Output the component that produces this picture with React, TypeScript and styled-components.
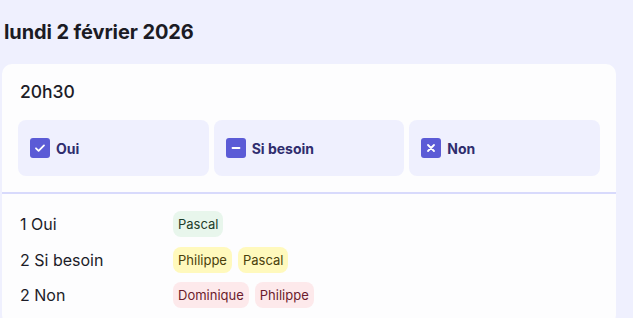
import React from 'react';
import styled, { createGlobalStyle } from 'styled-components';

const GlobalStyle = createGlobalStyle`
  html, body {
    margin: 0;
    padding: 0;
    background: #eff0fe;
    font-family: Inter, 'Noto Sans', sans-serif;
    color: #1c1c28;
  }
`;

const Page = styled.div`
  padding: 18px 17px 0 2px;
`;

const DayTitle = styled.h2`
  margin: 0 0 18px 2px;
  font-size: 20px;
  font-weight: 700;
  letter-spacing: -0.1px;
  line-height: 28px;
  color: #1b1b24;
`;

const Card = styled.section`
  background: #fdfdfe;
  border-radius: 10px;
  overflow: hidden;
`;

const CardHeader = styled.div`
  padding: 17px 16px 16px 16px;
  border-bottom: 2px solid #d8dafc;
`;

const Time = styled.div`
  margin-left: 2px;
  font-size: 17.5px;
  font-weight: 500;
  line-height: 22px;
  margin-bottom: 17px;
`;

const Choices = styled.div`
  display: grid;
  grid-template-columns: repeat(3, 1fr);
  gap: 5px;
`;

const Choice = styled.button`
  display: flex;
  align-items: center;
  gap: 6px;
  height: 56px;
  padding: 0 12px;
  border: none;
  border-radius: 8px;
  background: #eff0fe;
  font-family: inherit;
  font-size: 14px;
  font-weight: 700;
  color: #2f2d6e;
  cursor: pointer;
`;

const Box = styled.span`
  display: inline-flex;
  align-items: center;
  justify-content: center;
  width: 20px;
  height: 20px;
  border-radius: 3px;
  background: #5b5bd6;
  color: #fff;
`;

const Results = styled.div`
  display: flex;
  flex-direction: column;
  gap: 9.5px;
  padding: 17px 18px;
`;

const Row = styled.div`
  display: grid;
  grid-template-columns: 153px 1fr;
  align-items: center;
`;

const Label = styled.span`
  font-size: 16px;
  color: #1c1c28;
`;

const Chips = styled.div`
  display: flex;
  gap: 6px;
`;

const tones = {
  yes: { bg: '#e8f6ec', fg: '#1e3d2a' },
  maybe: { bg: '#fff9bd', fg: '#4a3f0c' },
  no: { bg: '#fde9eb', fg: '#6b1c2c' },
};

type Tone = keyof typeof tones;

const Chip = styled.span<{ $tone: Tone }>`
  display: inline-flex;
  align-items: center;
  height: 26px;
  padding: 0 5px;
  border-radius: 8px;
  font-size: 13px;
  background: ${({ $tone }) => tones[$tone].bg};
  color: ${({ $tone }) => tones[$tone].fg};
`;

const Check = () => (
  <svg width="12" height="12" viewBox="0 0 12 12" fill="none">
    <path d="M2 6.3l2.6 2.5L10 3.4" stroke="#fff" strokeWidth="1.8" strokeLinecap="round" strokeLinejoin="round" />
  </svg>
);

const Dash = () => (
  <svg width="12" height="12" viewBox="0 0 12 12" fill="none">
    <path d="M2.5 6h7" stroke="#fff" strokeWidth="1.8" strokeLinecap="round" />
  </svg>
);

const Cross = () => (
  <svg width="12" height="12" viewBox="0 0 12 12" fill="none">
    <path d="M3 3l6 6M9 3l-6 6" stroke="#fff" strokeWidth="1.8" strokeLinecap="round" />
  </svg>
);

const choices = [
  { label: 'Oui', icon: <Check /> },
  { label: 'Si besoin', icon: <Dash /> },
  { label: 'Non', icon: <Cross /> },
];

const results: { label: string; tone: Tone; names: string[] }[] = [
  { label: '1 Oui', tone: 'yes', names: ['Pascal'] },
  { label: '2 Si besoin', tone: 'maybe', names: ['Philippe', 'Pascal'] },
  { label: '2 Non', tone: 'no', names: ['Dominique', 'Philippe'] },
];

const App: React.FC = () => (
  <>
    <GlobalStyle />
    <Page>
      <DayTitle>lundi 2 février 2026</DayTitle>
      <Card>
        <CardHeader>
          <Time>20h30</Time>
          <Choices>
            {choices.map(c => (
              <Choice key={c.label}>
                <Box>{c.icon}</Box>
                {c.label}
              </Choice>
            ))}
          </Choices>
        </CardHeader>
        <Results>
          {results.map(r => (
            <Row key={r.label}>
              <Label>{r.label}</Label>
              <Chips>
                {r.names.map(n => (
                  <Chip key={n} $tone={r.tone}>
                    {n}
                  </Chip>
                ))}
              </Chips>
            </Row>
          ))}
        </Results>
      </Card>
    </Page>
  </>
);

export default App;
